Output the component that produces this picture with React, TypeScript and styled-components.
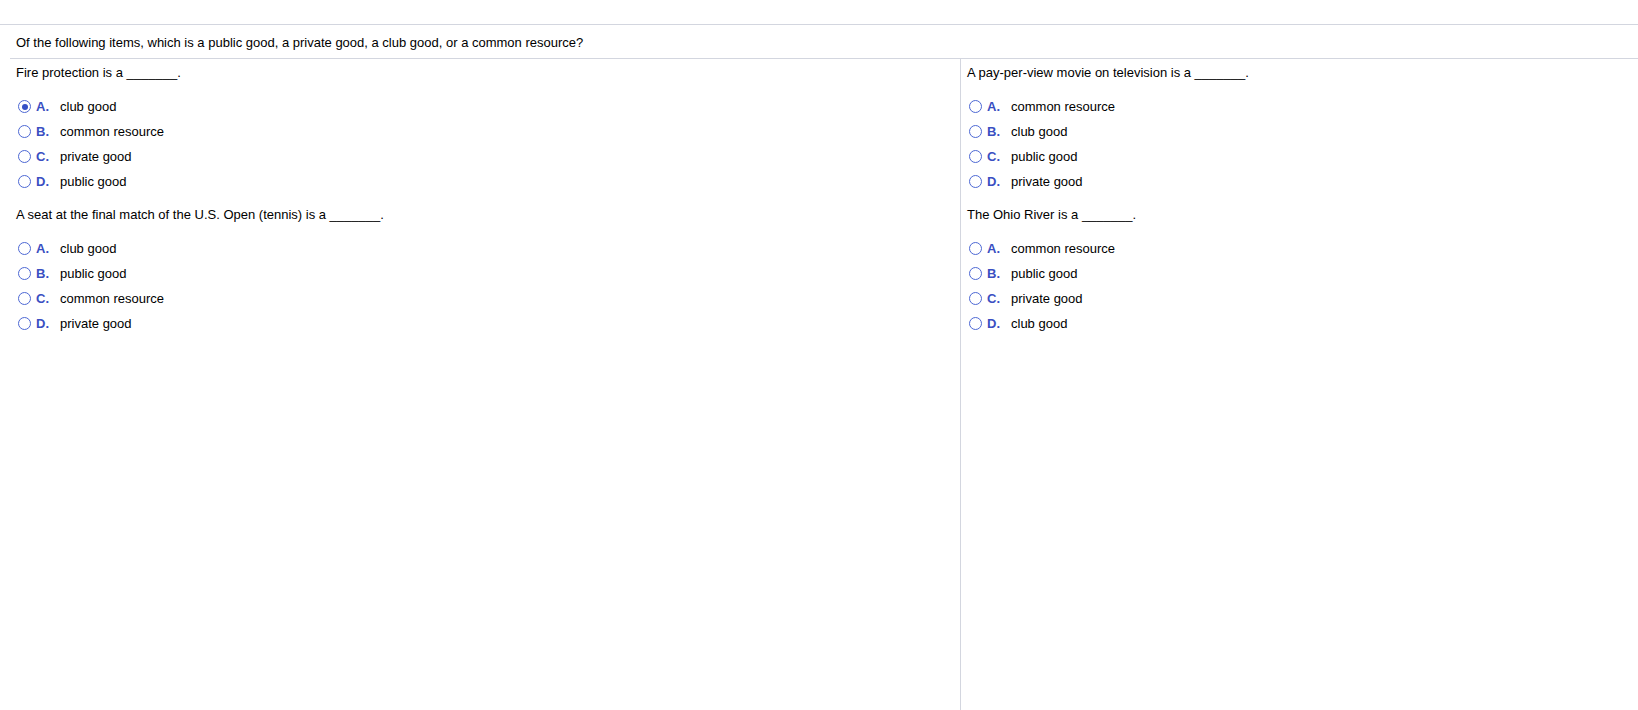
import styled, { createGlobalStyle } from 'styled-components';

type Option = {
	letter: string;
	text: string;
};

type Part = {
	id: string;
	prompt: string;
	options: Option[];
	selected?: string;
};

const GlobalStyle = createGlobalStyle`
	html, body {
		margin: 0;
		padding: 0;
		background: #ffffff;
	}
	body {
		font-family: 'Liberation Sans', Arial, sans-serif;
		font-size: 13px;
		color: #000000;
	}
`;

const Page = styled.div`
	display: flex;
	flex-direction: column;
	min-height: 100vh;
	padding-top: 24px;
	box-sizing: border-box;
`;

const Question = styled.div`
	display: flex;
	flex-direction: column;
	flex: 1;
	border-top: 1px solid #d3d6df;
	padding-left: 10px;
`;

const Stem = styled.p`
	margin: 0;
	padding: 10px 6px 8px;
	line-height: 15px;
	border-bottom: 1px solid #d3d6df;
`;

const Columns = styled.div`
	display: grid;
	grid-template-columns: 950px 1fr;
	flex: 1;
`;

const Column = styled.div<{ $divider?: boolean }>`
	padding: 6px 6px 0;
	border-left: ${({ $divider }) => ($divider ? '1px solid #d3d6df' : 'none')};
`;

const PartBlock = styled.div`
	& + & {
		margin-top: 13px;
	}
`;

const Prompt = styled.p`
	margin: 0 0 13px;
	line-height: 16px;
`;

const OptionList = styled.ul`
	list-style: none;
	margin: 0;
	padding: 0;
`;

const OptionRow = styled.li`
	display: flex;
	align-items: center;
	height: 25px;
	padding-left: 2px;
`;

const Radio = styled.span<{ $checked?: boolean }>`
	position: relative;
	width: 11px;
	height: 11px;
	border: 1px solid #4d68d4;
	border-radius: 50%;
	margin-right: 5px;
	flex-shrink: 0;
	background: #ffffff;

	&::after {
		content: '';
		display: ${({ $checked }) => ($checked ? 'block' : 'none')};
		position: absolute;
		left: 2.5px;
		top: 2.5px;
		width: 6px;
		height: 6px;
		border-radius: 50%;
		background: #3550c6;
	}
`;

const Letter = styled.span`
	width: 24px;
	color: #3a4fc2;
	font-weight: bold;
`;

const OptionText = styled.span`
	line-height: 16px;
`;

const left: Part[] = [
	{
		id: 'fire',
		prompt: 'Fire protection is a',
		selected: 'A',
		options: [
			{ letter: 'A', text: 'club good' },
			{ letter: 'B', text: 'common resource' },
			{ letter: 'C', text: 'private good' },
			{ letter: 'D', text: 'public good' },
		],
	},
	{
		id: 'seat',
		prompt: 'A seat at the final match of the U.S. Open (tennis) is a',
		options: [
			{ letter: 'A', text: 'club good' },
			{ letter: 'B', text: 'public good' },
			{ letter: 'C', text: 'common resource' },
			{ letter: 'D', text: 'private good' },
		],
	},
];

const right: Part[] = [
	{
		id: 'movie',
		prompt: 'A pay-per-view movie on television is a',
		options: [
			{ letter: 'A', text: 'common resource' },
			{ letter: 'B', text: 'club good' },
			{ letter: 'C', text: 'public good' },
			{ letter: 'D', text: 'private good' },
		],
	},
	{
		id: 'river',
		prompt: 'The Ohio River is a',
		options: [
			{ letter: 'A', text: 'common resource' },
			{ letter: 'B', text: 'public good' },
			{ letter: 'C', text: 'private good' },
			{ letter: 'D', text: 'club good' },
		],
	},
];

const QuestionPart = ({ part }: { part: Part }) => (
	<PartBlock>
		<Prompt>
			{part.prompt} _______.
		</Prompt>
		<OptionList>
			{part.options.map((option) => (
				<OptionRow key={option.letter}>
					<Radio $checked={part.selected === option.letter} />
					<Letter>{option.letter}.</Letter>
					<OptionText>{option.text}</OptionText>
				</OptionRow>
			))}
		</OptionList>
	</PartBlock>
);

const App = () => {
	return (
		<Page>
			<GlobalStyle />
			<Question>
				<Stem>
					Of the following items, which is a public good, a private good, a club
					good, or a common resource?
				</Stem>
				<Columns>
					<Column>
						{left.map((part) => (
							<QuestionPart key={part.id} part={part} />
						))}
					</Column>
					<Column $divider>
						{right.map((part) => (
							<QuestionPart key={part.id} part={part} />
						))}
					</Column>
				</Columns>
			</Question>
		</Page>
	);
};

export default App;
